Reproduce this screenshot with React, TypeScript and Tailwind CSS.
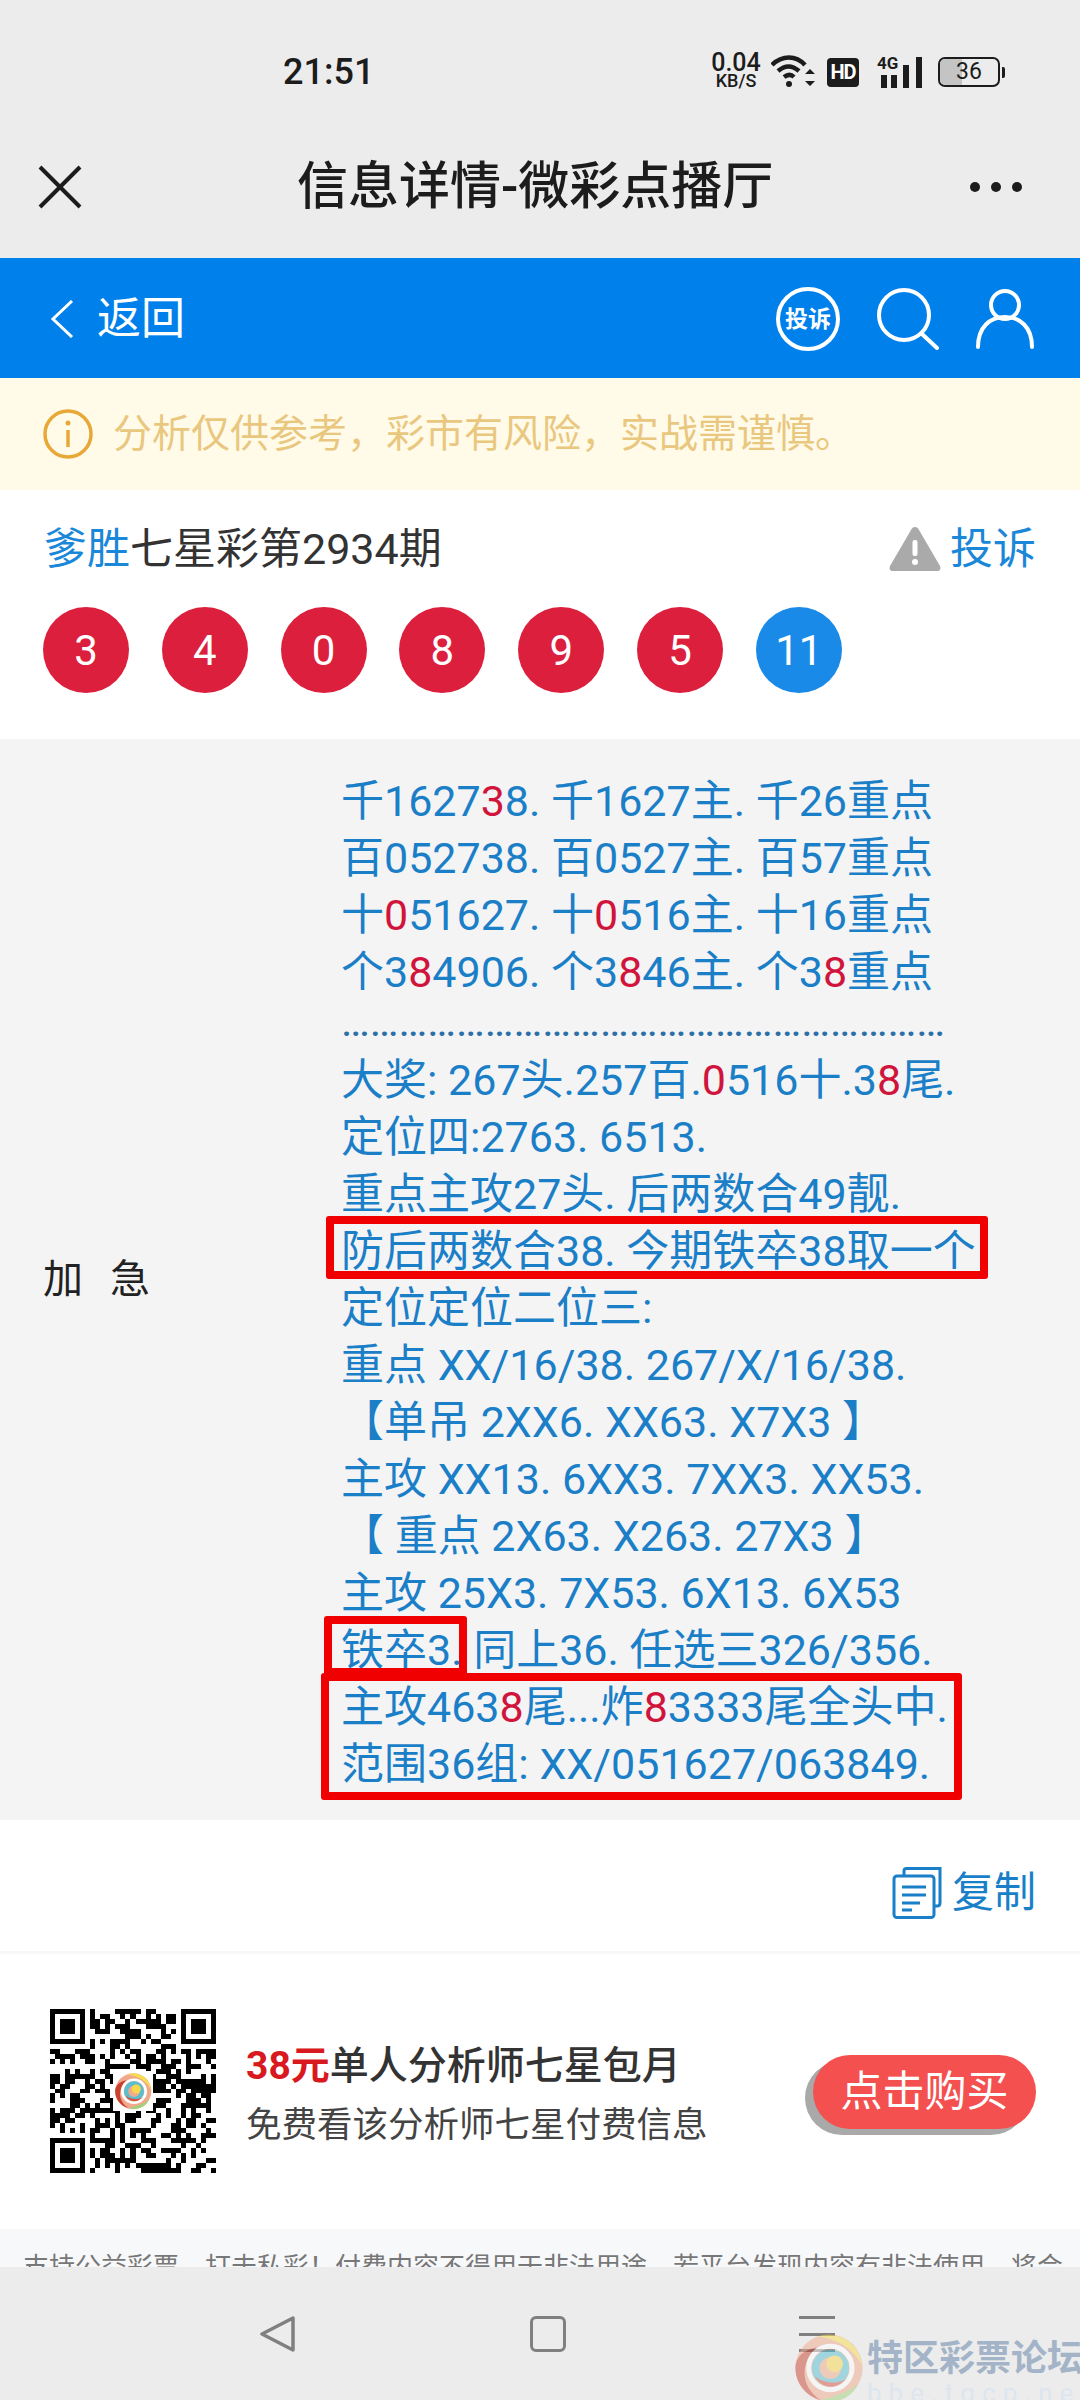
import type { ReactNode } from 'react';

const R = ({ children }: { children: ReactNode }) => <span className="text-[#d0143c]">{children}</span>;

// pseudo-random QR modules
function qrModules() {
  const n = 33;
  let seed = 91;
  const rnd = () => {
    seed = (seed * 1103515245 + 12345) & 0x7fffffff;
    return (seed >> 12) % 100;
  };
  let d = '';
  for (let y = 0; y < n; y++) {
    for (let x = 0; x < n; x++) {
      const finder = (x < 8 && y < 8) || (x > 24 && y < 8) || (x < 8 && y > 24);
      const center = x > 12 && x < 20 && y > 12 && y < 20;
      if (finder || center) continue;
      if (rnd() < 52) d += `M${x} ${y}h1v1h-1z`;
    }
  }
  return d;
}

function Finder({ x, y }: { x: number; y: number }) {
  return (
    <g transform={`translate(${x} ${y})`}>
      <path d="M0 0h7v7h-7zM1 1v5h5v-5z" fillRule="evenodd" fill="#000" />
      <rect x="2" y="2" width="3" height="3" fill="#000" />
    </g>
  );
}

function QrCode() {
  return (
    <svg width="166" height="164" viewBox="0 0 33 33" shapeRendering="crispEdges" className="shrink-0" preserveAspectRatio="none">
      <path d={qrModules()} fill="#000" />
      <Finder x={0} y={0} />
      <Finder x={26} y={0} />
      <Finder x={0} y={26} />
      <rect x="12.5" y="12.5" width="8" height="8" fill="#fff" />
      <g transform="translate(12.8 12.8) scale(0.075)" shapeRendering="auto">
        <SwirlShapes />
      </g>
    </svg>
  );
}

function SwirlShapes() {
  return (
    <>
      <circle cx="50" cy="50" r="48" fill="#f0a98c" />
      <path d="M34 5a48 48 0 0 1 56 20c4 7 6 14 7 22-8-20-30-38-63-42z" fill="#f6e04a" />
      <path d="M2 50a48 48 0 0 0 36 46c-18-12-26-30-22-48 2-10 8-20 18-28C14 24 2 34 2 50z" fill="#c9412f" />
      <path d="M38 96c20 6 44-2 54-24-16 14-36 18-54 24z" fill="#9fd27a" />
      <circle cx="52" cy="50" r="31" fill="none" stroke="#fff" strokeWidth="7" />
      <circle cx="52" cy="50" r="21" fill="none" stroke="#58bfd0" strokeWidth="11" />
      <path d="M30 62c6 14 28 22 44 4-14 8-30 6-44-4z" fill="#d8503c" />
      <circle cx="58" cy="44" r="12" fill="#f6d84a" />
    </>
  );
}

function StatusBar() {
  return (
    <div className="h-[104px] flex items-start justify-between pt-[54px] pl-[283px] pr-[75px] text-[#1c1c1c]">
      <span className="text-[36px] leading-[36px] font-medium">21:51</span>
      <div className="flex items-start">
        <div className="flex flex-col items-center w-[52px] -mt-[2px] font-medium">
          <span className="text-[25px] leading-[21px]">0.04</span>
          <span className="text-[18px] leading-[16px]">KB/S</span>
        </div>
        <svg width="44" height="33" viewBox="0 0 44 33" className="ml-[9px] mt-[1px]" fill="none" stroke="#1c1c1c" strokeWidth="4.5">
          <path d="M1 10C11 0 25 0 34 10" />
          <path d="M7 16c7-6 14-6 21 0" />
          <path d="M13 22c4-3 7-3 10 0" />
          <circle cx="18" cy="29" r="3" fill="#1c1c1c" stroke="none" />
          <path d="M34 19l5-5 5 5zM34 26l5 5 5-5z" fill="#1c1c1c" stroke="none" />
        </svg>
        <div className="ml-[12px] mt-[4px] w-[32px] h-[29px] rounded-[4px] bg-[#1c1c1c] text-white text-[20px] leading-[29px] text-center font-bold tracking-[-1px]">HD</div>
        <svg width="46" height="33" viewBox="0 0 46 33" className="ml-[18px] mt-[1px] overflow-visible">
          <text x="0" y="14" fontSize="17" fontWeight="700" fill="#1c1c1c">4G</text>
          <rect x="4" y="20" width="6" height="13" fill="#1c1c1c" />
          <rect x="14" y="20" width="6" height="13" fill="#1c1c1c" />
          <rect x="26" y="10" width="6" height="23" fill="#1c1c1c" />
          <rect x="39" y="2" width="6" height="31" fill="#1c1c1c" />
        </svg>
        <div className="ml-[15px] mt-[3px] flex items-center">
          <div className="relative w-[62px] h-[30px] rounded-[7px] border-2 border-[#1c1c1c] overflow-hidden">
            <div className="w-[22px] h-full bg-[#c4c4c4]" />
            <span className="absolute inset-0 text-center text-[23px] leading-[26px] text-[#1c1c1c]">36</span>
          </div>
          <div className="ml-[2px] w-[3px] h-[11px] rounded-r-[2px] bg-[#1c1c1c]" />
        </div>
      </div>
    </div>
  );
}

function TitleBar() {
  return (
    <div className="h-[154px] flex items-start pt-[39px] pl-[38px] pr-[58px] relative text-[#1c1c1c]">
      <svg width="44" height="44" viewBox="0 0 44 44" className="mt-[22px]" stroke="#1c1c1c" strokeWidth="4">
        <path d="M2 2l40 40M42 2L2 42" />
      </svg>
      <span className="ml-[215px] text-[51px] leading-[88px] font-medium">信息详情-微彩点播厅</span>
      <div className="ml-auto mt-[39px] flex gap-[11px]">
        <span className="w-[10px] h-[10px] rounded-full bg-[#1c1c1c]" />
        <span className="w-[10px] h-[10px] rounded-full bg-[#1c1c1c]" />
        <span className="w-[10px] h-[10px] rounded-full bg-[#1c1c1c]" />
      </div>
    </div>
  );
}

function BlueBar() {
  return (
    <div className="h-[120px] bg-[#0080ea] flex items-center pl-[50px] pr-[46px] pt-[2px] text-white">
      <svg width="24" height="38" viewBox="0 0 24 38" fill="none" stroke="#fff" strokeWidth="3" className="shrink-0">
        <path d="M22 1L3 19l19 18" />
      </svg>
      <span className="ml-[23px] text-[44px]">返回</span>
      <div className="ml-auto flex items-center">
        <div className="w-[64px] h-[64px] rounded-full border-[4px] border-white flex items-center justify-center text-[23px] leading-none font-bold">投诉</div>
        <svg width="62" height="62" viewBox="0 0 62 62" fill="none" stroke="#fff" strokeWidth="4" strokeLinecap="round" className="ml-[37px]">
          <circle cx="27" cy="27" r="25" />
          <path d="M45 46l15 14" />
        </svg>
        <svg width="58" height="60" viewBox="0 0 58 60" fill="none" stroke="#fff" strokeWidth="4" strokeLinecap="round" className="ml-[37px]">
          <circle cx="29" cy="16" r="14" />
          <path d="M2 58c0-20 12-30 27-30s27 10 27 30" />
        </svg>
      </div>
    </div>
  );
}

function Notice() {
  return (
    <div className="h-[112px] bg-[#fffbe8] flex items-center pl-[43px]">
      <svg width="50" height="50" viewBox="0 0 50 50" fill="none" stroke="#e8a838" strokeWidth="3.5" className="shrink-0">
        <circle cx="25" cy="25" r="23" />
        <circle cx="25" cy="14" r="2.5" fill="#e8a838" stroke="none" />
        <path d="M25 21v17" />
      </svg>
      <span className="ml-[20px] text-[39px] text-[#e9c77f]">分析仅供参考，彩市有风险，实战需谨慎。</span>
    </div>
  );
}

const balls = ['3', '4', '0', '8', '9', '5', '11'];

function Result() {
  return (
    <div className="h-[249px] bg-white px-[44px] pt-[29px]">
      <div className="flex items-center h-[60px]">
        <span className="text-[43px] text-[#333]">
          <span className="text-[#1a87d8]">爹胜</span>七星彩第2934期
        </span>
        <svg width="52" height="44" viewBox="0 0 52 44" className="ml-auto -translate-x-[3px]">
          <path d="M26 0c2 0 3 1 4 3l21 36c1 3 0 5-3 5H4c-3 0-4-2-3-5L22 3c1-2 2-3 4-3z" fill="#aaa" />
          <rect x="23.5" y="13" width="5" height="16" rx="2" fill="#fff" />
          <circle cx="26" cy="35" r="3" fill="#fff" />
        </svg>
        <span className="ml-[6px] text-[43px] text-[#1a87d8]">投诉</span>
      </div>
      <div className="flex gap-[32.800px] mt-[28px] -ml-[1px]">
        {balls.map((b, i) => (
          <div
            key={i}
            className={
              b === '11'
                ? 'w-[86px] h-[86px] rounded-full bg-[#1a8ae8] text-white text-[42px] flex items-center justify-center'
                : 'w-[86px] h-[86px] rounded-full bg-[#dc1f3c] text-white text-[42px] flex items-center justify-center'
            }
          >
            {b}
          </div>
        ))}
      </div>
    </div>
  );
}

const topLines: ReactNode[] = [
  <>千1627<R>3</R>8. 千1627主. 千26重点</>,
  <>百052738. 百0527主. 百57重点</>,
  <>十<R>0</R>51627. 十<R>0</R>516主. 十16重点</>,
  <>个3<R>8</R>4906. 个3<R>8</R>46主. 个3<R>8</R>重点</>,
];

const lines: ReactNode[] = [
  <>大奖: 267头.257百.<R>0</R>516十.3<R>8</R>尾.</>,
  <>定位四:2763. 6513.</>,
  <>重点主攻27头. 后两数合49靓.</>,
  <>防后两数合38. 今期铁卒38取一个</>,
  <>定位定位二位三:</>,
  <>重点 XX/16/38. 267/X/16/38.</>,
  <>【单吊 2XX6. XX63. X7X3 】</>,
  <>主攻 XX13. 6XX3. 7XX3. XX53.</>,
  <>【 重点 2X63. X263. 27X3 】</>,
  <>主攻 25X3. 7X53. 6X13. 6X53</>,
  <>铁卒3. 同上36. 任选三326/356.</>,
  <>主攻463<R>8</R>尾...炸<R>8</R>3333尾全头中.</>,
  <>范围36组: XX/051627/063849.</>,
];

function Detail() {
  return (
    <div className="h-[1081px] bg-[#f4f4f5] flex">
      <div className="w-[341px] shrink-0 pl-[43px] flex items-center gap-[27px] text-[40px] text-[#222]">
        <span>加</span>
        <span>急</span>
      </div>
      <div className="relative pt-[34px] text-[43px] leading-[57px] text-[#1b7fc8] whitespace-pre">
        {topLines.map((l, i) => (
          <div key={i}>{l}</div>
        ))}
        <div className="h-[51px] leading-[41px] text-[#2a6fa8]">{'…'.repeat(21)}</div>
        {lines.map((l, i) => (
          <div key={i}>{l}</div>
        ))}
        {/* hand-drawn red marks */}
        <div className="absolute left-[-15px] top-[477px] w-[662px] h-[63px] border-[8px] border-[#f00000] rounded-[3px]" />
        <div className="absolute left-[-17px] top-[877px] w-[143px] h-[60px] border-[8px] border-[#f00000] rounded-[3px]" />
        <div className="absolute left-[-20px] top-[934px] w-[641px] h-[127px] border-[8px] border-[#f00000] rounded-[3px]" />
      </div>
    </div>
  );
}

function CopyRow() {
  return (
    <div className="h-[131px] bg-white flex items-center justify-end pr-[44px] pt-[14px]">
      <svg width="50" height="52" viewBox="0 0 50 52" fill="none" stroke="#1a7fc9" strokeWidth="3">
        <path d="M12 8V4c0-1.500 1-2.500 2.500-2.500H48V36c0 2-1 3-3 3h-3" />
        <rect x="2" y="9" width="40" height="41.500" rx="3" />
        <path d="M10 20h24M10 28h24M10 36h18M10 43h10" />
      </svg>
      <span className="ml-[10px] text-[42px] text-[#1a7fc9]">复制</span>
    </div>
  );
}

function Offer() {
  return (
    <div className="h-[278px] bg-white border-t-[3px] border-[#f8f8f8] flex items-center pl-[50px] pr-[44px] pb-[2px]">
      <QrCode />
      <div className="ml-[30px] mt-[8px]">
        <div className="text-[39px] leading-[60px] font-medium text-[#333]">
          <span className="text-[#d81920] font-bold">38元</span>单人分析师七星包月
        </div>
        <div className="text-[35.500px] leading-[58px] text-[#444]">免费看该分析师七星付费信息</div>
      </div>
      <div className="ml-auto mt-[2px] w-[223px] h-[74px] rounded-full bg-[#f45050] text-white text-[42px] flex items-center justify-center shadow-[-8px_6px_0_#a9a9a9]">
        点击购买
      </div>
    </div>
  );
}

function Disclaimer() {
  return (
    <div className="h-[38px] bg-[#f7f8fa] pl-[23px] pt-[22px] overflow-hidden text-[26px] leading-[32px] text-[#777] whitespace-nowrap">
      支持公益彩票，打击私彩！付费内容不得用于非法用途，若平台发现内容有非法使用，将会
    </div>
  );
}

function NavBar() {
  return (
    <div className="relative flex-1 overflow-hidden bg-[#ececec] flex items-start pt-[49px] pl-[260px]">
      <svg width="36" height="36" viewBox="0 0 36 36" fill="none" stroke="#808080" strokeWidth="3.500" strokeLinejoin="round">
        <path d="M33 2v32L2 18z" />
      </svg>
      <div className="ml-[234px] w-[36px] h-[36px] rounded-[6px] border-[3.500px] border-[#808080]" />
      <div className="ml-[233px] w-[36px] h-[36px] flex flex-col justify-between">
        <div className="h-[3px] bg-[#808080]" />
        <div className="h-[3px] bg-[#808080]" />
        <div className="h-[3px] bg-[#808080]" />
      </div>
      {/* forum watermark */}
      <div className="absolute left-[794px] top-[66px] w-[286px] flex items-start">
        <svg width="70" height="70" viewBox="0 0 100 100" className="opacity-50 shrink-0">
          <SwirlShapes />
        </svg>
        <div className="ml-[3px] mt-[5px]">
          <div className="text-[36px] leading-[42px] font-bold text-[#a4b4c8] whitespace-nowrap">特区彩票论坛</div>
          <div className="text-[26px] leading-[26px] tracking-[7px] text-[#dde5ef] whitespace-nowrap">bbe.tqcp.net</div>
        </div>
      </div>
    </div>
  );
}

export default function App() {
  return (
    <div className="w-[1080px] h-[2400px] overflow-hidden flex flex-col bg-[#ececec] font-['Roboto','Noto_Sans_CJK_SC',sans-serif]">
      <StatusBar />
      <TitleBar />
      <BlueBar />
      <Notice />
      <Result />
      <Detail />
      <CopyRow />
      <Offer />
      <Disclaimer />
      <NavBar />
    </div>
  );
}
